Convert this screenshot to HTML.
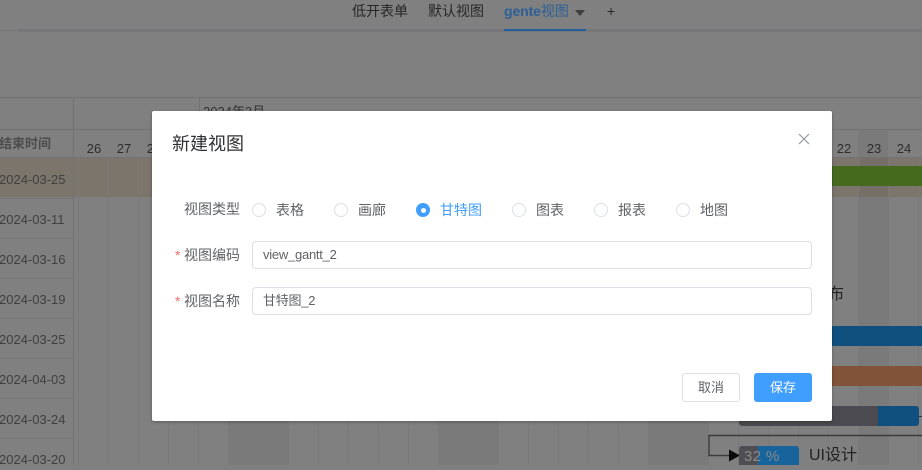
<!DOCTYPE html>
<html><head><meta charset="utf-8"><style>
*{box-sizing:border-box}
html,body{margin:0;padding:0}
body{width:922px;height:465px;overflow:hidden;position:relative;background:#808080;font-family:"Liberation Sans","Noto Sans CJK SC",sans-serif;}
.a{position:absolute}
.t{position:absolute;white-space:nowrap;line-height:20px}
.r{position:absolute;width:14px;height:14px;border-radius:50%;border:1px solid #dcdfe6;top:203px;background:#fff}
.l{position:absolute;top:200px;font-size:14px;line-height:20px;color:#606266;white-space:nowrap}
.f{position:absolute;font-size:14px;line-height:20px;color:#606266;white-space:nowrap}
.i{position:absolute;left:252px;width:560px;height:28px;border:1px solid #dcdfe6;border-radius:4px;background:#fff;padding-left:10px;font-size:13px;letter-spacing:-.25px;line-height:26px;color:#606266;white-space:nowrap}
.d{position:absolute;left:-1px;font-size:13px;color:#404040;line-height:20px;white-space:nowrap}
.n{position:absolute;top:139px;width:30px;text-align:center;font-size:13px;line-height:20px;color:#2c2c2c}
</style></head><body>
<!-- tabs -->
<div class="a" style="left:0;top:30px;width:19px;height:1px;background:#777"></div>
<div class="a" style="left:19px;top:29px;width:903px;height:3px;background:#777779"></div>
<div class="a" style="left:504px;top:29px;width:82px;height:2px;background:#205f9c"></div>
<div class="t" style="left:352px;top:1px;font-size:14px;color:#262626">低开表单</div>
<div class="t" style="left:428px;top:1px;font-size:14px;color:#262626">默认视图</div>
<div class="t" style="left:504px;top:1px;font-size:14px;letter-spacing:-.1px;color:#2b5f95;font-weight:bold">gente<span style="font-weight:normal">视图</span></div>
<svg class="a" style="left:574px;top:9px" width="12" height="8"><path d="M1 1H11L6 7Z" fill="#3f3f3f"/></svg>
<div class="t" style="left:607px;top:1px;font-size:14px;color:#262626">+</div>
<!-- grid shading -->
<div class="a" style="left:228px;top:130px;width:60px;height:335px;background:#7a7a7a"></div>
<div class="a" style="left:438px;top:130px;width:60px;height:335px;background:#7a7a7a"></div>
<div class="a" style="left:648px;top:130px;width:60px;height:335px;background:#7a7a7a"></div>
<div class="a" style="left:858px;top:130px;width:30px;height:335px;background:#7a7a7a"></div>
<div class="a" style="left:0;top:157px;width:922px;height:40px;background:#7c756c"></div>
<div class="a" style="left:858px;top:157px;width:30px;height:40px;background:#766f67"></div>
<!-- grid lines -->
<svg class="a" style="left:0;top:0" width="922" height="465">
<g stroke="#7a7a7a" stroke-width="1">
<path d="M108.5 157V465M138.5 157V465M168.5 157V465M198.5 157V465M228.5 157V465M258.5 157V465M288.5 157V465M318.5 157V465M348.5 157V465M378.5 157V465M408.5 157V465M438.5 157V465M468.5 157V465M498.5 157V465M528.5 157V465M558.5 157V465M588.5 157V465M618.5 157V465M648.5 157V465M678.5 157V465M708.5 157V465M738.5 157V465M768.5 157V465M798.5 157V465M828.5 157V465M858.5 157V465M888.5 157V465M918.5 157V465M78.5 157V465"/>
</g>
<g stroke="#727272" stroke-width="1">
<path d="M0 97.5H922M0 129.5H922M0 157.5H922"/>
<path d="M73.5 97V465M199.5 97V129"/>
</g>
<g stroke="#787878" stroke-width="1">
<path d="M0 198.5H73M0 238.5H73M0 278.5H73M0 318.5H73M0 358.5H73M0 398.5H73M0 438.5H73"/>
</g>
</svg>
<div class="t" style="left:203px;top:102px;font-size:13px;color:#333">2024年3月</div>
<div class="t" style="left:-1px;top:134px;font-size:13px;font-weight:bold;color:#4c4c4c">结束时间</div>
<div class="n" style="left:79px">26</div><div class="n" style="left:109px">27</div><div class="n" style="left:139px">28</div>
<div class="n" style="left:829px">22</div><div class="n" style="left:859px">23</div><div class="n" style="left:889px">24</div>
<div class="d" style="top:170px">2024-03-25</div>
<div class="d" style="top:210px">2024-03-11</div>
<div class="d" style="top:250px">2024-03-16</div>
<div class="d" style="top:290px">2024-03-19</div>
<div class="d" style="top:330px">2024-03-25</div>
<div class="d" style="top:370px">2024-04-03</div>
<div class="d" style="top:410px">2024-03-24</div>
<div class="d" style="top:450px">2024-03-20</div>
<!-- bars -->
<div class="a" style="left:820px;top:166px;width:102px;height:20px;background:#456a1e"></div>
<div class="t" style="left:828px;top:285px;font-size:16px;color:#222">布</div>
<div class="a" style="left:820px;top:326px;width:102px;height:20px;background:#10507e"></div>
<div class="a" style="left:820px;top:366px;width:102px;height:20px;background:#815339"></div>
<div class="a" style="left:739px;top:406px;width:139px;height:20px;background:#4b4b4f;border-radius:3px 0 0 3px"></div>
<div class="a" style="left:878px;top:406px;width:41px;height:20px;background:#10507e;border-radius:0 3px 3px 0"></div>
<svg class="a" style="left:700px;top:410px" width="222" height="55">
<path d="M219 6.5H222" stroke="#333" fill="none"/>
<path d="M222 25.5H9V45.5H30" stroke="#3c3c3c" stroke-width="1.4" fill="none"/>
<path d="M29 39.5L40 45.5L29 51.5Z" fill="#0a0a0a"/>
</svg>
<div class="a" style="left:739px;top:446px;width:60px;height:19px;background:#17639c;border-radius:3px 3px 0 0"></div>
<div class="a" style="left:739px;top:446px;width:19px;height:19px;background:#4e4e54;border-radius:3px 0 0 0"></div>
<div class="t" style="left:744px;top:447px;font-size:15px;letter-spacing:.4px;color:#8a8a8a">32 %</div>
<div class="t" style="left:809px;top:446px;font-size:16px;color:#222">UI设计</div>
<!-- dialog -->
<div class="a" style="left:152px;top:111px;width:680px;height:310px;background:#fff;border-radius:2px;box-shadow:0 1px 3px rgba(0,0,0,.3)"></div>
<div class="t" style="left:172px;top:134px;font-size:18px;line-height:20px;color:#303133">新建视图</div>
<svg class="a" style="left:798px;top:133px" width="12" height="12"><path d="M1 1L11 11M11 1L1 11" stroke="#909399" stroke-width="1.1"/></svg>
<div class="f" style="left:184px;top:199px">视图类型</div>
<div class="r" style="left:252px"></div><div class="l" style="left:276px">表格</div>
<div class="r" style="left:334px"></div><div class="l" style="left:358px">画廊</div>
<div class="r" style="left:416px;background:#409eff;border-color:#409eff"><div class="a" style="left:3.5px;top:3.5px;width:5px;height:5px;border-radius:50%;background:#fff"></div></div><div class="l" style="left:440px;color:#409eff">甘特图</div>
<div class="r" style="left:512px"></div><div class="l" style="left:536px">图表</div>
<div class="r" style="left:594px"></div><div class="l" style="left:618px">报表</div>
<div class="r" style="left:676px"></div><div class="l" style="left:700px">地图</div>
<div class="f" style="left:175px;top:245px;color:#f56c6c">*</div>
<div class="f" style="left:184px;top:245px">视图编码</div>
<div class="i" style="top:241px">view_gantt_2</div>
<div class="f" style="left:175px;top:291px;color:#f56c6c">*</div>
<div class="f" style="left:184px;top:291px">视图名称</div>
<div class="i" style="top:287px">甘特图_2</div>
<div class="a" style="left:682px;top:373px;width:58px;height:29px;border:1px solid #dcdfe6;border-radius:3px;background:#fff;text-align:center;font-size:13px;line-height:27px;color:#606266">取消</div>
<div class="a" style="left:754px;top:373px;width:58px;height:29px;border-radius:3px;background:#409eff;text-align:center;font-size:13px;line-height:29px;color:#fff">保存</div>
</body></html>
